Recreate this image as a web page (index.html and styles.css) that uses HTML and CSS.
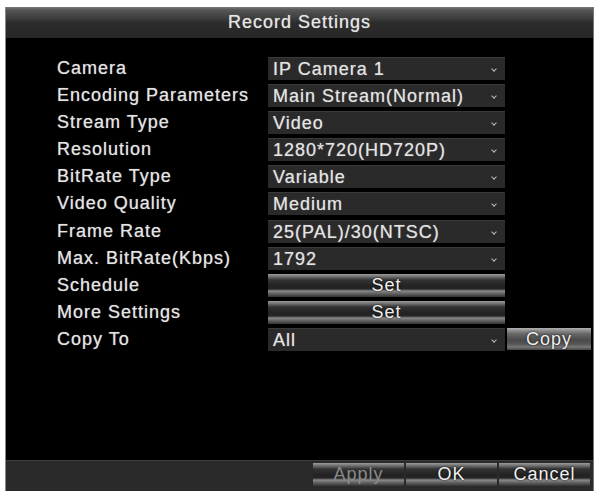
FILE: index.html
```html
<!DOCTYPE html>
<html>
	<head>
		<title>Record Settings</title>
		<link rel="stylesheet" href="styles.css">
	</head>
	<body>
		<!--window-->
		<div class="window">
			<div class="title">Record Settings</div>
			<!--settings form-->
			<div class="content">
				<div class="form">
					<span class="label">Camera</span>
					<div class="select">IP Camera 1</div>
					<span></span>

					<span class="label">Encoding Parameters</span>
					<div class="select">Main Stream(Normal)</div>
					<span></span>

					<span class="label">Stream Type</span>
					<div class="select">Video</div>
					<span></span>

					<span class="label">Resolution</span>
					<div class="select">1280*720(HD720P)</div>
					<span></span>

					<span class="label">BitRate Type</span>
					<div class="select">Variable</div>
					<span></span>

					<span class="label">Video Quality</span>
					<div class="select">Medium</div>
					<span></span>

					<span class="label">Frame Rate</span>
					<div class="select">25(PAL)/30(NTSC)</div>
					<span></span>

					<span class="label">Max. BitRate(Kbps)</span>
					<div class="select">1792</div>
					<span></span>

					<span class="label">Schedule</span>
					<button type="button" class="btn wide">Set</button>
					<span></span>

					<span class="label">More Settings</span>
					<button type="button" class="btn wide">Set</button>
					<span></span>

					<span class="label">Copy To</span>
					<div class="select">All</div>
					<button type="button" class="btn copy">Copy</button>
				</div>
			</div>
			<!--/settings form-->
			<!--footer-->
			<div class="footer">
				<button type="button" class="btn foot disabled">Apply</button>
				<button type="button" class="btn foot">OK</button>
				<button type="button" class="btn foot">Cancel</button>
			</div>
		</div>
		<!--/window-->
	</body>
</html>
```

FILE: styles.css
```css
body{
	margin:0;
	padding:7px 4px 2px 5px;
	background:#fff;
	font-family:"Liberation Sans", Arial, sans-serif;
}
.window{
	height:484px;
	display:flex;
	flex-direction:column;
	background:#000;
	border-left:1px solid #888;
	border-right:1px solid #777;
	box-sizing:border-box;
}
.title{
	height:31px;
	line-height:31px;
	text-align:center;
	color:#e6e6e6;
	font-size:18px;
	letter-spacing:1px;
	text-shadow:0 0 1px #aaa;
	background:linear-gradient(#7a7a7a 0, #555 3px, #444 9px, #2c2c2c 16px, #262626 100%);
}
.content{
	flex:1;
	padding:19px 0 0 51px;
}
.form{
	display:grid;
	grid-template-columns:209px 237px 84px;
	grid-auto-rows:23px;
	row-gap:4.1px;
	column-gap:2px;
	align-items:center;
}
.label, .select, .btn{
	color:#e4e4e4;
	font-size:18px;
	letter-spacing:1px;
	font-family:"Liberation Sans", Arial, sans-serif;
	text-shadow:0 0 1px #999;
}
.select{
	height:23px;
	line-height:23px;
	padding-left:5px;
	background:#2a2a2a;
	border-top:1px solid #3a3a3a;
	box-sizing:border-box;
	position:relative;
}
.select:after{
	content:"";
	position:absolute;
	right:9px;
	top:9px;
	width:3px;
	height:3px;
	border-right:1px solid #bbb;
	border-bottom:1px solid #bbb;
	transform:rotate(45deg);
}
.btn{
	height:23px;
	padding:0;
	border:none;
	text-align:center;
	color:#f0f0f0;
	background:linear-gradient(#9c9c9c 0, #6a6a6a 3px, #333 6px, #222 12px, #262626 15px, #8a8a8a 17px, #5c5c5c 20px, #333 100%);
	text-shadow:0 0 2px #000;
}
.copy{
	height:22px;
	background:linear-gradient(#b0b0b0 0, #888 3px, #666 6px, #4a4a4a 12px, #555 16px, #777 19px, #444 100%);
}
.footer{
	height:31px;
	display:flex;
	justify-content:flex-end;
	padding:2px 3px 0 0;
	gap:2px;
	background:#2a2a2a;
	border-top:1px solid #3c3c3c;
	box-sizing:border-box;
}
.foot{
	width:91px;
	height:23px;
}
.disabled{
	color:#8a8a8a;
	text-shadow:none;
}
```
